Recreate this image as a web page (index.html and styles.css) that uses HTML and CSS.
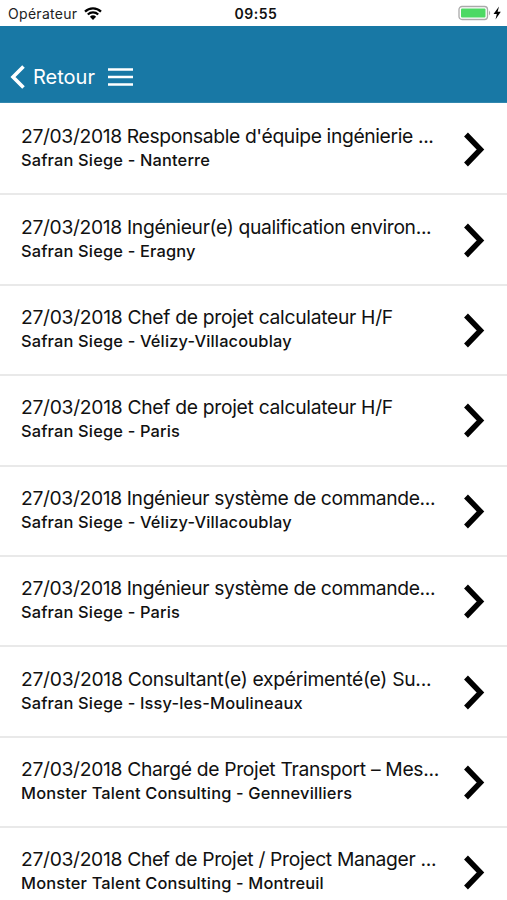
FILE: index.html
```html
<!DOCTYPE html>
<html lang="fr">
<head>
<meta charset="utf-8">
<title>Offres</title>
<link rel="stylesheet" href="styles.css">
</head>
<body>
<div class="status">
  <div class="carrier"><span class="operator">Opérateur</span>
    <svg class="wifi" width="18" height="13" viewBox="0 0 18 13"><path d="M1 4.600a11.400 11.400 0 0 1 16 0M3.800 7.500a7.400 7.400 0 0 1 10.400 0" fill="none" stroke="#000" stroke-width="2.200"/><path d="M9 13L5.900 9.700a4.500 4.500 0 0 1 6.200 0z"/></svg>
  </div>
  <div class="time">09:55</div>
  <svg class="battery" width="46" height="16" viewBox="0 0 46 16"><rect x="1" y="1.500" width="28.500" height="13" rx="3" fill="#fff" stroke="#aaa" stroke-width="1.300"/><rect x="3" y="3.500" width="24.500" height="9" rx="1" fill="#4cd964"/><path d="M31 5.500q2.400 2.500 0 5z" fill="#aaa"/><path d="M41 1.500L35.500 9h3.300l-1.300 5.500 5.300-7.700h-3.200z"/></svg>
</div>
<header class="nav">
  <svg width="16" height="24" viewBox="0 0 16 24"><path d="M13.500 1.500L3 12l10.500 10.500" fill="none" stroke="#fff" stroke-width="3.600"/></svg>
  <span class="back">Retour</span>
  <svg class="menu" width="25" height="20" viewBox="0 0 25 20"><path d="M0 2.500h25M0 10h25M0 17.500h25" stroke="#fff" stroke-width="2.400"/></svg>
</header>
<main class="list" id="list"></main>
<script src="script.js"></script>
</body>
</html>
```
FILE: styles.css
```css
* { box-sizing: border-box; }
body { margin: 0; width: 507px; height: 900px; overflow: hidden; background: #fff; color: #111; font-family: Inter, sans-serif; }
.status { height: 25.5px; display: grid; grid-template-columns: 1fr auto 1fr; align-items: center; padding: 1px 3px 0 8px; }
.carrier { display: flex; align-items: center; gap: 7px; font-size: 14px; }
.operator { letter-spacing: .3px; color: #222; }
.time { font-size: 14px; font-weight: 600; letter-spacing: .5px; }
.battery { justify-self: end; }
.nav { height: 77.5px; background: #1878a5; color: #fff; display: flex; align-items: center; padding: 27px 0 0 10px; border-bottom: 1px solid #3187ae; }
.back { font-size: 20px; margin: 0 13px 0 7px; }
.list { padding-top: 2px; }
.row { height: 90.4px; border-bottom: 2px solid #e9e9e9; display: flex; align-items: center; justify-content: space-between; padding: 0 22px 0 21px; }
.text { padding-bottom: 4px; white-space: nowrap; }
.title { font-size: 19.300px; line-height: 26px; letter-spacing: calc(var(--track) * 1px); }
.place { font-size: 16.400px; line-height: 22px; font-weight: 550; letter-spacing: .17px; }
.chevron { flex: none; }
```
FILE: script.js
```js
const rows = [
  ["Responsable d'équipe ingénierie ...", "Safran Siege - Nanterre", -.36],
  ["Ingénieur(e) qualification environ...", "Safran Siege - Eragny", -.34],
  ["Chef de projet calculateur H/F", "Safran Siege - Vélizy-Villacoublay", -.3],
  ["Chef de projet calculateur H/F", "Safran Siege - Paris", -.3],
  ["Ingénieur système de commande...", "Safran Siege - Vélizy-Villacoublay", -.36],
  ["Ingénieur système de commande...", "Safran Siege - Paris", -.36],
  ["Consultant(e) expérimenté(e) Su...", "Safran Siege - Issy-les-Moulineaux", -.28],
  ["Chargé de Projet Transport – Mes...", "Monster Talent Consulting - Gennevilliers", -.32],
  ["Chef de Projet / Project Manager ...", "Monster Talent Consulting - Montreuil", -.33]
];
document.getElementById("list").innerHTML = rows.map(([t, p, k]) => `<div class="row"><div class="text"><div class="title" style="--track:${k}">27/03/2018 ${t}</div><div class="place">${p}</div></div><svg class="chevron" width="22" height="36" viewBox="0 0 22 36"><path d="M3 3.500L17.500 18.500 3 33.500" fill="none" stroke="#000" stroke-width="5.400"/></svg></div>`).join("");
```
